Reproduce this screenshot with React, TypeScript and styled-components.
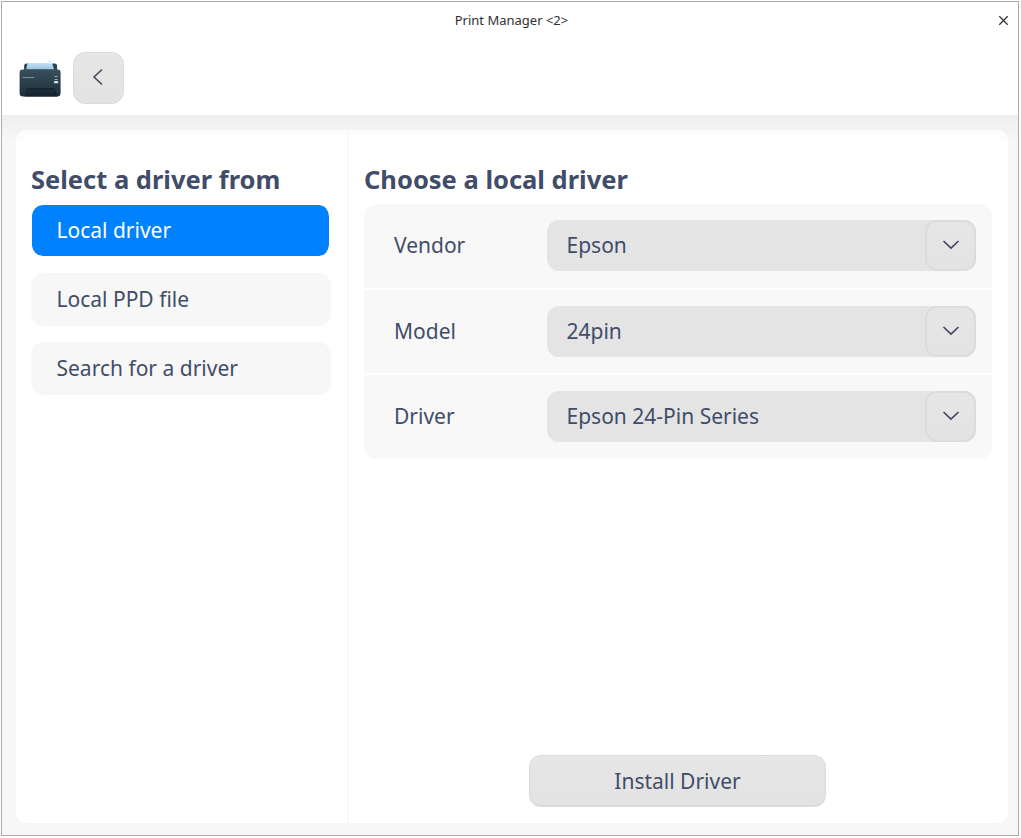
import React from "react";
import styled, { createGlobalStyle, css } from "styled-components";

const ink = "#414d68";

const GlobalStyle = createGlobalStyle`
  *, *::before, *::after { box-sizing: border-box; }
  body {
    margin: 0;
    background: #ffffff;
    font-family: "Noto Sans", sans-serif;
    color: ${ink};
  }
  button { font: inherit; color: inherit; padding: 0; }
`;

const Page = styled.div`
  width: 1021px;
  height: 838px;
  padding: 1px 2px 2px 1px;
  overflow: hidden;
`;

const Window = styled.main`
  display: flex;
  flex-direction: column;
  width: 1018px;
  height: 835px;
  border: 1px solid #a9abac;
  background: #f7f7f7;
`;

const Header = styled.header`
  flex: none;
  height: 113px;
  background: #ffffff;
`;

const TitleBar = styled.div`
  display: grid;
  grid-template-columns: 30px 1fr 30px;
  align-items: center;
  height: 38px;
`;

const WindowTitle = styled.div`
  grid-column: 2;
  padding: 0 0 2px 3px;
  text-align: center;
  font-size: 13px;
  line-height: 18px;
  color: #303030;
`;

const CloseButton = styled.button`
  display: flex;
  justify-content: center;
  padding: 0 0 2px;
  border: 0;
  background: none;
`;

const Toolbar = styled.div`
  display: flex;
  align-items: flex-start;
  gap: 11px;
  padding: 12px 0 0 16px;
`;

const raised = css`
  border: 2px solid #dcdcdc;
  border-radius: 12px;
  background: linear-gradient(#e6e6e6, #e3e3e3);
`;

const BackButton = styled.button`
  ${raised}
  display: flex;
  align-items: center;
  justify-content: center;
  width: 51px;
  height: 52px;
  padding: 0 2px 2px 0;
  border-width: 1px;
`;

const Body = styled.div`
  flex: 1;
  display: flex;
  padding: 15px 10px 12px 14px;
  background: linear-gradient(#efefef, #f7f7f7 28px);
`;

const Panel = styled.div`
  flex: 1;
  display: flex;
  border-radius: 10px;
  background: linear-gradient(#fcfcfc, #ffffff 14px);
`;

const Sidebar = styled.nav`
  display: flex;
  flex-direction: column;
  width: 333px;
  padding: 30px 16px 0 15px;
  border-right: 2px solid #f8f8f8;
`;

const Heading = styled.h2`
  margin: 0;
  font-size: 25.5px;
  line-height: 38px;
  font-weight: 700;
  white-space: nowrap;
`;

const SourceList = styled.div`
  display: flex;
  flex-direction: column;
  gap: 16px;
  padding-top: 6px;
`;

const Source = styled.button<{ $active?: boolean }>`
  height: 53px;
  padding: 0 0 2px 24.5px;
  border: solid ${(p) => (p.$active ? "#ffffff" : "#f7f7f7")};
  border-width: 1px ${(p) => (p.$active ? "2px" : "1px")} 1px 1px;
  border-radius: 12px;
  background: ${(p) => (p.$active ? "#0081ff" : "#f7f7f7")};
  background-clip: padding-box;
  color: ${(p) => (p.$active ? "#ffffff" : ink)};
  font-size: 21px;
  line-height: 30px;
  text-align: left;
`;

const Content = styled.section`
  flex: 1;
  display: flex;
  flex-direction: column;
  padding: 30px 16px 16px 15px;
`;

const Form = styled.div`
  display: flex;
  flex-direction: column;
  gap: 2px;
  height: 255px;
  margin-top: 6px;
  overflow: hidden;
  border-radius: 12px;
`;

const Field = styled.div`
  flex: 1;
  display: flex;
  align-items: flex-start;
  justify-content: space-between;
  padding: 16px 16px 0 30px;
  background: #f8f8f8;
  font-size: 21px;
  line-height: 51px;
`;

const Combo = styled.div`
  display: flex;
  justify-content: space-between;
  width: 429px;
  height: 51px;
  padding-left: 19.5px;
  border-radius: 12px;
  background: #e4e4e4;
`;

const ComboButton = styled.button`
  ${raised}
  display: flex;
  align-items: center;
  justify-content: center;
  width: 51px;
  height: 51px;
  padding: 0 0 1px 1px;
`;

const InstallButton = styled.button`
  ${raised}
  align-self: center;
  width: 297px;
  height: 52px;
  margin: auto 2px 0 0;
  padding-left: 1px;
  border-width: 1px 1px 2px;
  font-size: 21px;
  line-height: 30px;
`;

const PrinterIcon = styled(PrinterDrawing)`
  margin-top: 7px;
`;

function PrinterDrawing({ className }: { className?: string }) {
  return (
    <svg className={className} width="44" height="40" viewBox="-0.6 0 44 40" aria-hidden="true">
      <defs>
        <linearGradient id="case" x1="0" y1="0" x2="0" y2="1">
          <stop offset="0" stopColor="#39515d" />
          <stop offset="1" stopColor="#1c2d38" />
        </linearGradient>
        <linearGradient id="sheet" x1="0" y1="0" x2="0" y2="1">
          <stop offset="0" stopColor="#c3e2f5" />
          <stop offset="1" stopColor="#98c4e3" />
        </linearGradient>
      </defs>
      <rect x="5.5" y="4.5" width="33" height="12" rx="2.5" fill="#2b434e" />
      <path d="M9 4h24.500l2 6.500h-28z" fill="url(#sheet)" />
      <path d="m30 0 4 5h-4z" fill="#d3edf9" />
      <path d="M4 10.500h35q3 0 3 3V34q0 3.500-3.500 3.500h-34Q1 37.500 1 34V13.500q0-3 3-3z" fill="url(#case)" />
      <path d="M9 29h27l3 8.500H6z" fill="#14232d" />
      <rect x="9" y="30" width="27" height="4" fill="#192a35" />
      <path d="M4 18.500h4M8.500 18.500h7" stroke="#91a1a8" strokeWidth="1.200" opacity=".85" />
      <path d="M36 17.500h3M36 20.500h3" stroke="#9eb0b9" strokeWidth="1" />
      <rect x="35.500" y="22" width="4" height="2.200" rx=".5" fill="#d7e1e5" />
    </svg>
  );
}

const BackIcon = () => (
  <svg width="12" height="18" viewBox="0 0 12 18" fill="none" aria-hidden="true">
    <path d="m10 1.500-8 7.500 8 7.500" stroke="#47475f" strokeWidth="1.600" />
  </svg>
);

const CloseIcon = () => (
  <svg width="11" height="11" viewBox="0 0 11 11" fill="none" aria-hidden="true">
    <path d="m1.300 1.300 8.400 8.400m0-8.400L1.300 9.700" stroke="#333333" strokeWidth="1.250" />
  </svg>
);

const ChevronIcon = () => (
  <svg width="18" height="12" viewBox="0 0 18 12" fill="none" aria-hidden="true">
    <path d="m1.500 2 7.500 7 7.500-7" stroke="#45445f" strokeWidth="1.700" />
  </svg>
);

const fields = [
  ["Vendor", "Epson"],
  ["Model", "24pin"],
  ["Driver", "Epson 24-Pin Series"],
];

export default function App() {
  return (
    <Page>
      <GlobalStyle />
      <Window>
        <Header>
          <TitleBar>
            <WindowTitle>Print Manager &lt;2&gt;</WindowTitle>
            <CloseButton aria-label="Close"><CloseIcon /></CloseButton>
          </TitleBar>
          <Toolbar>
            <PrinterIcon />
            <BackButton aria-label="Back"><BackIcon /></BackButton>
          </Toolbar>
        </Header>
        <Body>
          <Panel>
            <Sidebar>
              <Heading>Select a driver from</Heading>
              <SourceList>
                <Source $active>Local driver</Source>
                <Source>Local PPD file</Source>
                <Source>Search for a driver</Source>
              </SourceList>
            </Sidebar>
            <Content>
              <Heading>Choose a local driver</Heading>
              <Form>
                {fields.map(([label, value]) => (
                  <Field key={label}>
                    <span>{label}</span>
                    <Combo>
                      <span>{value}</span>
                      <ComboButton aria-label={label}><ChevronIcon /></ComboButton>
                    </Combo>
                  </Field>
                ))}
              </Form>
              <InstallButton>Install Driver</InstallButton>
            </Content>
          </Panel>
        </Body>
      </Window>
    </Page>
  );
}
